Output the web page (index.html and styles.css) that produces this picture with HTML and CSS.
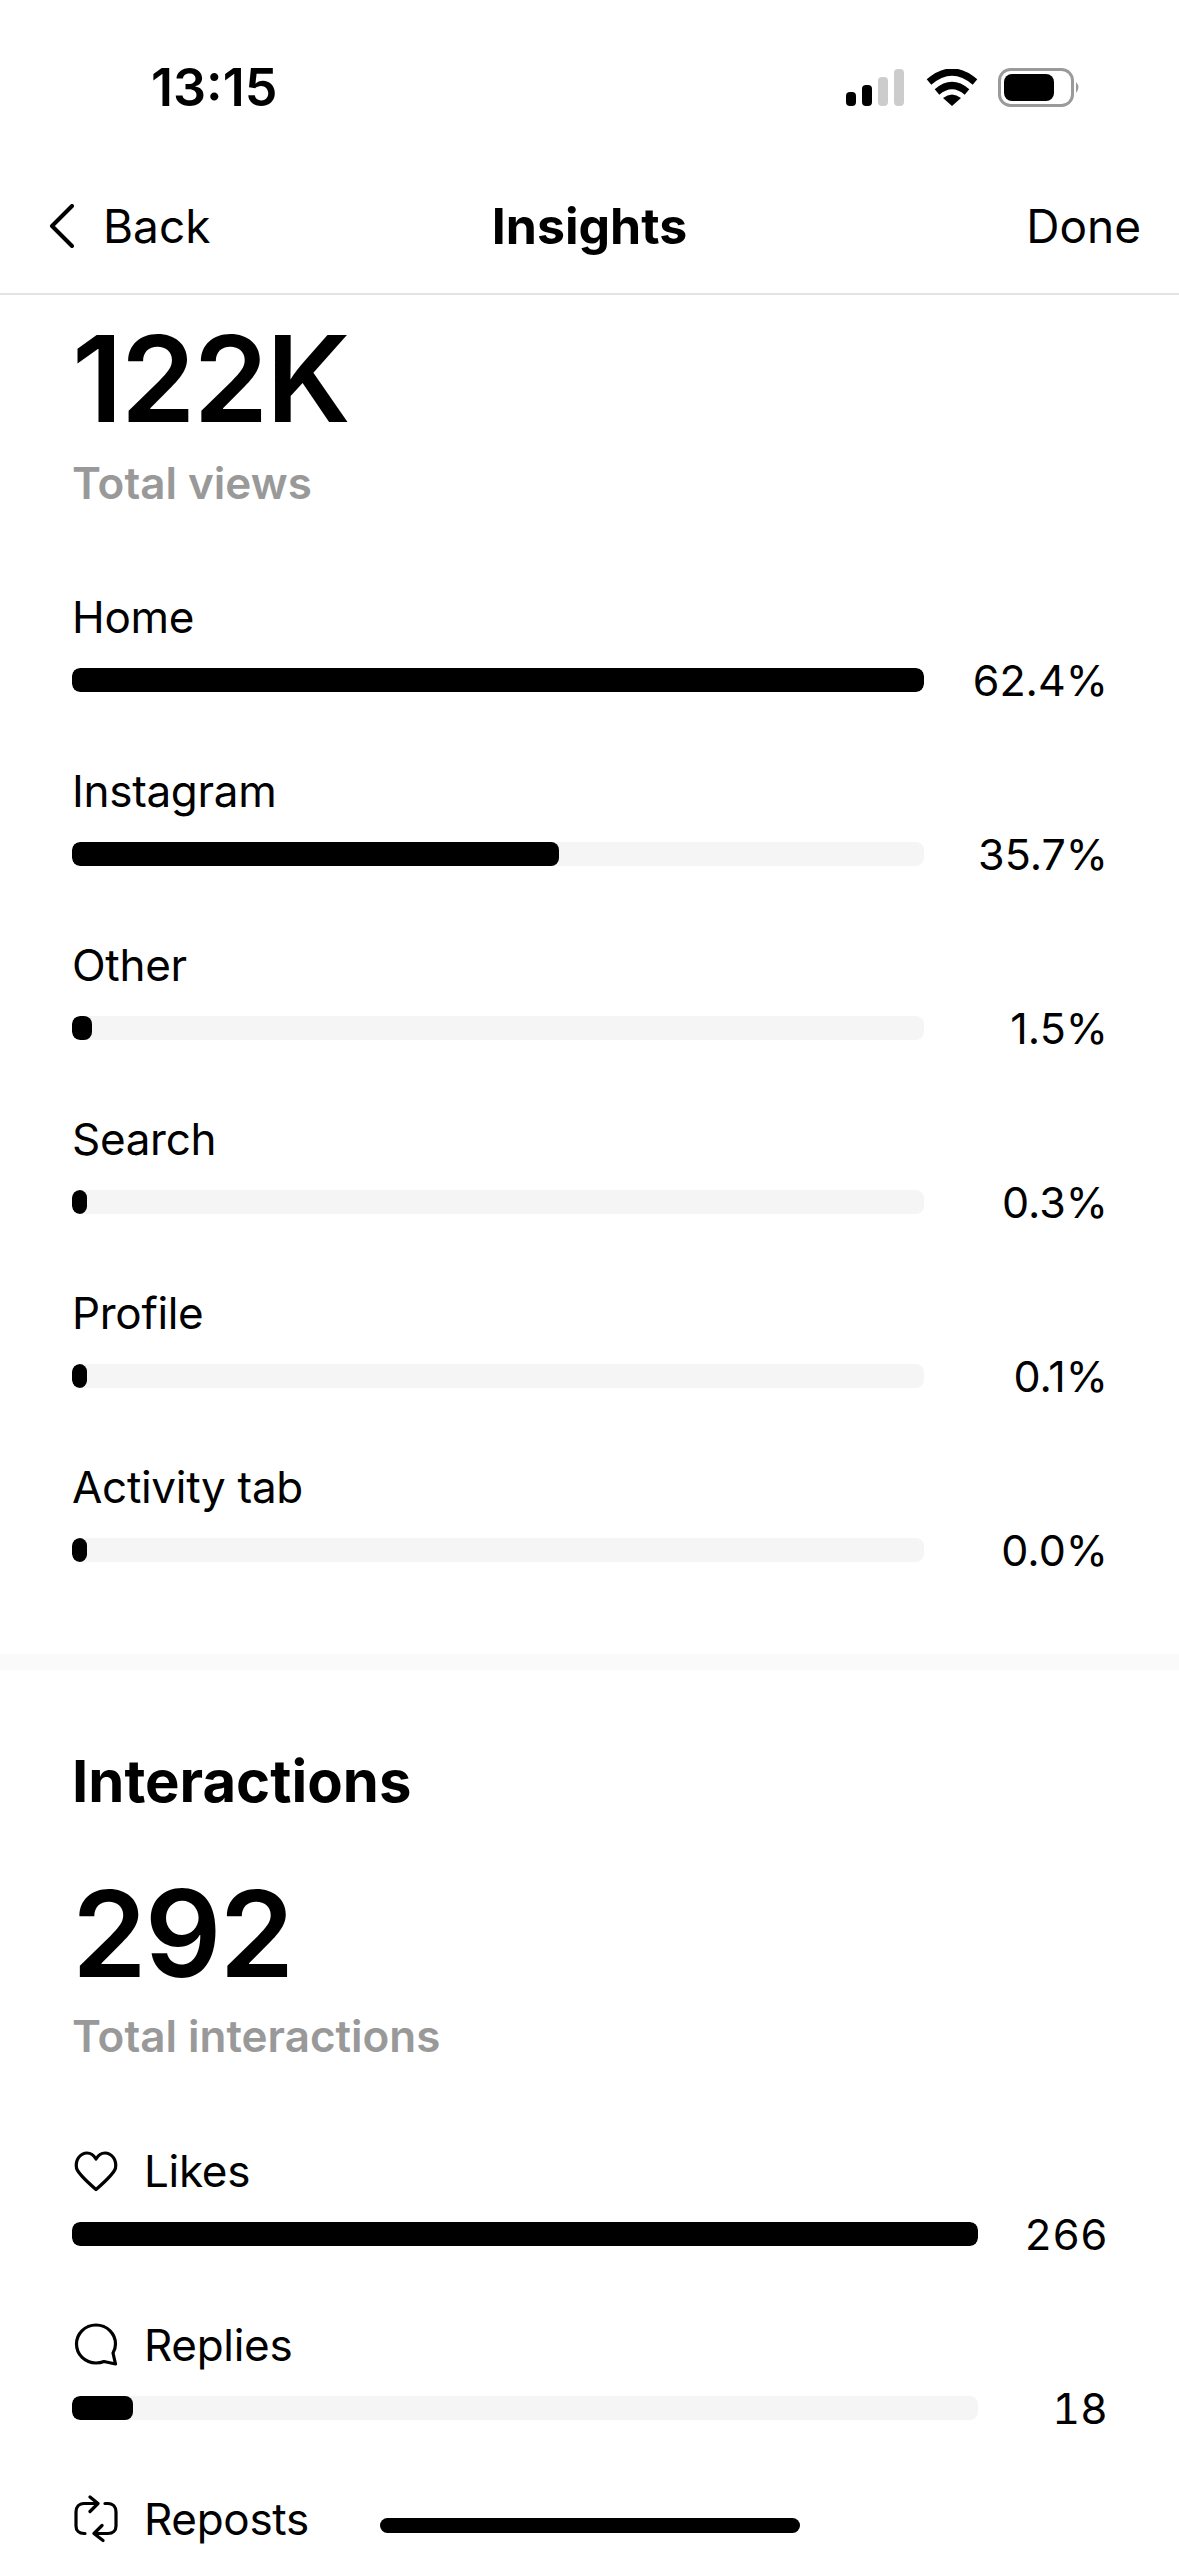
FILE: index.html
```html
<!DOCTYPE html>
<html lang="en">
<head>
  <meta charset="UTF-8">
  <meta name="viewport" content="width=device-width, initial-scale=1.0">
  <title>Insights</title>
  <link rel="stylesheet" href="styles.css">
</head>
<body>
  <div class="phone">
    <div class="status-bar">
      <span class="clock">13:15</span>
      <div class="status-icons">
        <svg class="signal" width="60" height="38" viewBox="0 0 60 38">
          <rect x="0" y="23" width="10" height="14" rx="4" fill="#000"/>
          <rect x="16" y="16" width="10" height="21" rx="4" fill="#000"/>
          <rect x="32" y="8" width="10" height="29" rx="4" fill="#ccc"/>
          <rect x="48" y="0" width="10" height="37" rx="4" fill="#ccc"/>
        </svg>
        <svg class="wifi" width="52" height="38" viewBox="0 0 52 38">
          <path d="M3 13 Q26 -7 49 13" fill="none" stroke="#000" stroke-width="7"/>
          <path d="M11 23 Q26 10 41 23" fill="none" stroke="#000" stroke-width="7"/>
          <path d="M17 29 Q26 22 35 29 L26 37 Z" fill="#000"/>
        </svg>
        <svg class="battery" width="84" height="40" viewBox="0 0 84 40">
          <rect x="1.5" y="1.5" width="73" height="36" rx="11" fill="none" stroke="#9a9a9a" stroke-width="3"/>
          <rect x="6" y="6" width="50" height="27" rx="8" fill="#000"/>
          <path d="M78 14 Q83 19 78 25 Z" fill="#9a9a9a"/>
        </svg>
      </div>
    </div>

    <div class="nav-bar">
      <div class="nav-back">
        <svg width="28" height="44" viewBox="0 0 28 44">
          <path d="M24 2 L4 22 L24 42" fill="none" stroke="#000" stroke-width="4" stroke-linecap="round" stroke-linejoin="round"/>
        </svg>
        <span>Back</span>
      </div>
      <div class="nav-title">Insights</div>
      <div class="nav-done">Done</div>
    </div>

    <div class="section views">
      <div class="big-number">122K</div>
      <div class="big-label">Total views</div>
      <div class="rows">
        <div class="row">
          <div class="row-label">Home</div>
          <div class="row-line">
            <div class="track"><div class="fill" style="width: 100%"></div></div>
            <div class="value">62.4%</div>
          </div>
        </div>
        <div class="row">
          <div class="row-label">Instagram</div>
          <div class="row-line">
            <div class="track"><div class="fill" style="width: 57.2%"></div></div>
            <div class="value">35.7%</div>
          </div>
        </div>
        <div class="row">
          <div class="row-label">Other</div>
          <div class="row-line">
            <div class="track"><div class="fill" style="width: 20px"></div></div>
            <div class="value">1.5%</div>
          </div>
        </div>
        <div class="row">
          <div class="row-label">Search</div>
          <div class="row-line">
            <div class="track"><div class="fill" style="width: 15px"></div></div>
            <div class="value">0.3%</div>
          </div>
        </div>
        <div class="row">
          <div class="row-label">Profile</div>
          <div class="row-line">
            <div class="track"><div class="fill" style="width: 15px"></div></div>
            <div class="value">0.1%</div>
          </div>
        </div>
        <div class="row">
          <div class="row-label">Activity tab</div>
          <div class="row-line">
            <div class="track"><div class="fill" style="width: 15px"></div></div>
            <div class="value">0.0%</div>
          </div>
        </div>
      </div>
    </div>

    <div class="divider"></div>

    <div class="section interactions">
      <h2 class="section-title">Interactions</h2>
      <div class="big-number">292</div>
      <div class="big-label">Total interactions</div>
      <div class="rows">
        <div class="row">
          <div class="row-label">
            <svg class="row-icon" width="48" height="48" viewBox="0 0 48 48">
              <path d="M24 42.5 C20 39 6 27 4.5 21 C3 12 9 6 15 6 C19 6 22 8.5 24 12 C26 8.5 29 6 33 6 C39 6 45 12 43.5 21 C42 27 28 39 24 42.5 Z" fill="none" stroke="#000" stroke-width="3.2" stroke-linejoin="round"/>
            </svg>
            Likes
          </div>
          <div class="row-line">
            <div class="track"><div class="fill" style="width: 100%"></div></div>
            <div class="value">266</div>
          </div>
        </div>
        <div class="row">
          <div class="row-label">
            <svg class="row-icon" width="48" height="48" viewBox="0 0 48 48">
              <path d="M43.5 43 L32 40.5 C29.5 41.5 27 42 24 42 C13 42 4.5 33.5 4.5 23 C4.5 12.5 13 4 24 4 C35 4 43.5 12.5 43.5 23 C43.5 26.5 42.5 29.5 41 32 Z" fill="none" stroke="#000" stroke-width="3.2" stroke-linejoin="round"/>
            </svg>
            Replies
          </div>
          <div class="row-line">
            <div class="track"><div class="fill" style="width: 6.77%"></div></div>
            <div class="value">18</div>
          </div>
        </div>
        <div class="row">
          <div class="row-label">
            <svg class="row-icon" width="48" height="48" viewBox="0 0 48 48" fill="none" stroke="#000" stroke-width="3.2" stroke-linecap="round" stroke-linejoin="round">
              <path d="M25 8.5 L12 8.5 C7 8.5 4 12 4 17 L4 31 C4 35.5 7 38.5 12 38.5 L13 38.5"/>
              <path d="M18 2 L26 8.5 L18 16.5"/>
              <path d="M33 8.5 L36 8.5 C41 8.5 44 12 44 17 L44 31 C44 35.5 41 38.5 36 38.5 L23 38.5"/>
              <path d="M30 30.5 L22 38.5 L31 45.5"/>
            </svg>
            Reposts
          </div>
        </div>
      </div>
    </div>

    <div class="home-indicator"></div>
  </div>
</body>
</html>
```

FILE: styles.css
```css
* {
  box-sizing: border-box;
}
body {
  margin: 0;
  background-color: #fff;
  color: #000;
  font-family: Inter, "Liberation Sans", sans-serif;
}
.phone {
  position: relative;
  width: 1179px;
  height: 2556px;
  overflow: hidden;
}
.status-bar {
  height: 168px;
  padding: 60px 97px 0 151px;
  display: flex;
  justify-content: space-between;
  align-items: flex-start;
}
.clock {
  font-size: 52px;
  font-weight: 600;
  line-height: 56px;
}
.status-icons {
  display: flex;
  align-items: center;
  gap: 20px;
  padding-top: 8px;
}
.nav-bar {
  height: 127px;
  padding: 0 38px 10px 48px;
  display: flex;
  justify-content: space-between;
  align-items: center;
  position: relative;
  border-bottom: 2px solid #e3e3e3;
  font-size: 46px;
}
.nav-back {
  display: flex;
  align-items: center;
  gap: 27px;
}
.nav-title {
  position: absolute;
  left: 0;
  right: 0;
  text-align: center;
  font-size: 50px;
  font-weight: 700;
}
.section {
  padding: 0 72px;
}
.views {
  height: 1359px;
  padding-top: 19px;
}
.big-number {
  font-size: 120px;
  font-weight: 600;
  line-height: 130px;
  letter-spacing: -2px;
}
.big-label {
  font-size: 44px;
  font-weight: 600;
  color: #999;
  line-height: 54px;
  margin-top: 12px;
}
.rows {
  margin-top: 81px;
  display: flex;
  flex-direction: column;
  gap: 50px;
}
.row-label {
  font-size: 44px;
  letter-spacing: -0.3px;
  line-height: 54px;
  height: 54px;
  padding-bottom: 2px;
  display: flex;
  align-items: center;
  gap: 24px;
}
.row-line {
  display: flex;
  align-items: center;
  justify-content: space-between;
  height: 70px;
}
.track {
  width: 852px;
  height: 24px;
  background-color: #f5f5f5;
  border-radius: 8px;
  overflow: hidden;
}
.interactions .track {
  width: 906px;
}
.fill {
  height: 100%;
  background-color: #000;
  border-radius: 8px;
}
.value {
  font-size: 43px;
  text-align: right;
  white-space: nowrap;
  margin-right: -1px;
}
.interactions .value {
  font-variant-numeric: tabular-nums;
}
.divider {
  height: 16px;
  background-color: #fafafa;
}
.section-title {
  margin: 0;
  padding-top: 76px;
  font-size: 58px;
  font-weight: 700;
  line-height: 70px;
}
.interactions .big-number {
  margin-top: 53px;
}
.interactions .big-label {
  margin-top: 10px;
}
.interactions .rows {
  margin-top: 82px;
}
.row-icon {
  flex: none;
}
.home-indicator {
  position: absolute;
  left: 380px;
  top: 2518px;
  width: 420px;
  height: 15px;
  background-color: #000;
  border-radius: 8px;
}
```
